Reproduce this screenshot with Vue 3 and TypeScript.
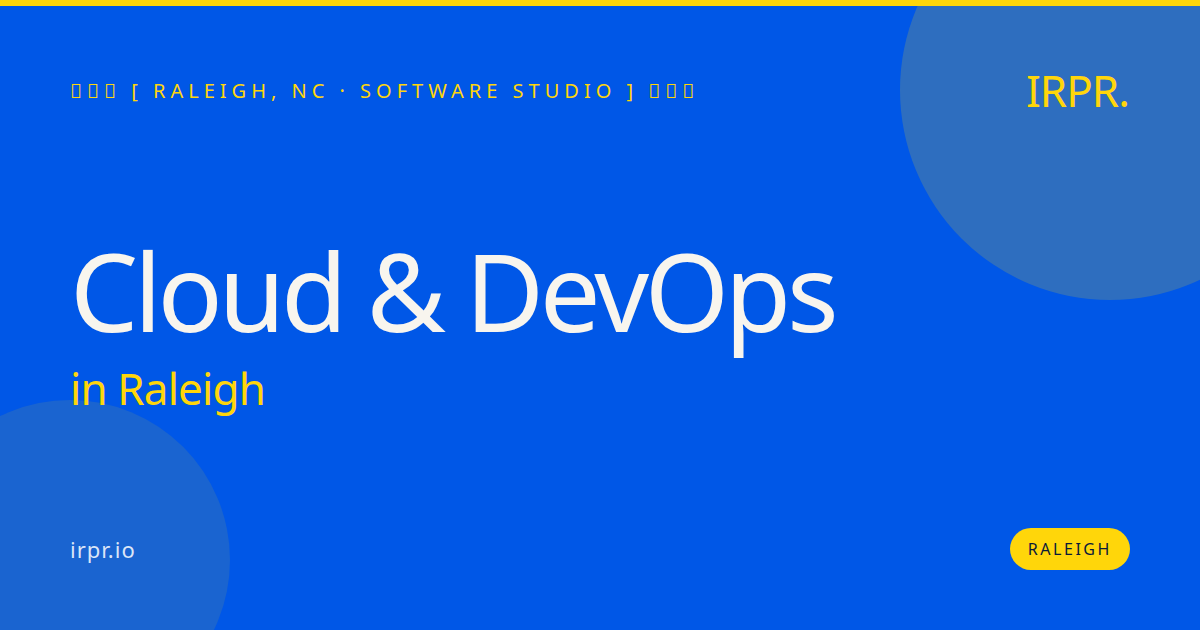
<template>
  <main class="card">
    <div class="circle circle-top"></div>
    <div class="circle circle-bottom"></div>
    <div class="top-bar"></div>
    <div class="content">
      <header class="header">
        <span class="eyebrow">&#xE000;&#xE000;&#xE000; [ RALEIGH, NC · SOFTWARE STUDIO ] &#xE000;&#xE000;&#xE000;</span>
        <span class="logo">IRPR.</span>
      </header>
      <section class="hero">
        <h1 class="title">Cloud &amp; DevOps</h1>
        <p class="subtitle">in Raleigh</p>
      </section>
      <footer class="footer">
        <span class="site">irpr.io</span>
        <span class="badge">RALEIGH</span>
      </footer>
    </div>
  </main>
</template>

<script setup lang="ts">
</script>

<style>
html,
body {
  margin: 0;
  padding: 0;
}
</style>

<style scoped>
.card {
  position: relative;
  width: 1200px;
  height: 630px;
  overflow: hidden;
  background: #0057e7;
  font-family: 'Noto Sans', sans-serif;
}

.top-bar {
  position: absolute;
  top: 0;
  left: 0;
  width: 100%;
  height: 6px;
  background: #ffd60a;
}

.circle {
  position: absolute;
  border-radius: 50%;
  background: rgba(255, 214, 10, 0.18);
}

.circle-top {
  top: -120px;
  left: 900px;
  width: 420px;
  height: 420px;
}

.circle-bottom {
  top: 400px;
  left: -90px;
  width: 320px;
  height: 320px;
  background: rgba(255, 214, 10, 0.1);
}

.content {
  position: relative;
  box-sizing: border-box;
  height: 630px;
  padding: 64px 70px 60px;
  display: flex;
  flex-direction: column;
}

.header {
  display: flex;
  justify-content: space-between;
  align-items: center;
}

.eyebrow {
  color: #ffd60a;
  font-size: 20px;
  letter-spacing: 5px;
}

.logo {
  margin-right: 1px;
  color: #ffd60a;
  font-size: 44px;
  letter-spacing: -1px;
  line-height: 52px;
}

.hero {
  margin-top: 110px;
}

.title {
  margin: 0;
  color: #f8f5ee;
  font-size: 108px;
  font-weight: 400;
  letter-spacing: -4.32px;
  line-height: 130px;
}

.subtitle {
  margin: 2px 0 0;
  color: #ffd60a;
  font-size: 44px;
  letter-spacing: -0.88px;
  line-height: 60px;
}

.footer {
  margin-top: auto;
  display: flex;
  justify-content: space-between;
  align-items: center;
}

.site {
  color: rgba(255, 255, 255, 0.85);
  font-size: 22px;
  letter-spacing: 1px;
}

.badge {
  padding: 10px 18px;
  border-radius: 21px;
  background: #ffd60a;
  color: #0a1a3a;
  font-size: 16px;
  letter-spacing: 2.56px;
  line-height: 22px;
}
</style>
